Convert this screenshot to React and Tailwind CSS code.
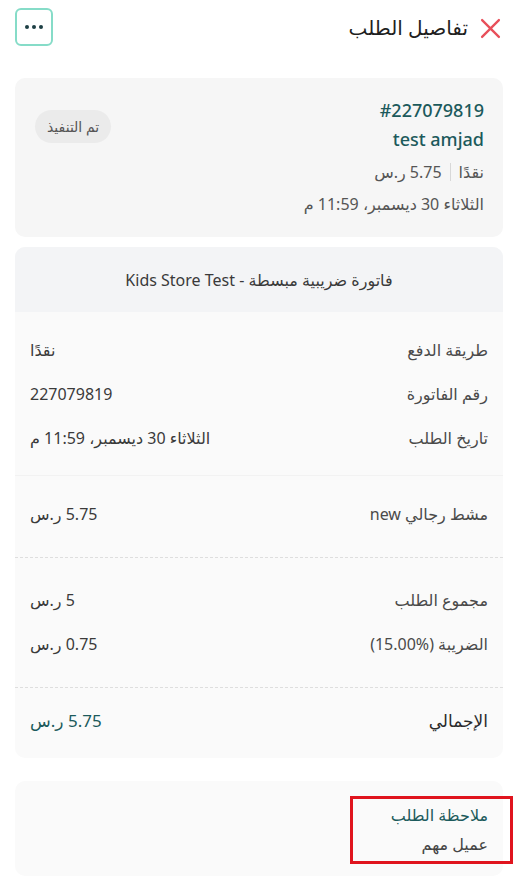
import React from 'react';

const font = { fontFamily: '"Noto Sans", "DejaVu Sans", sans-serif' };

function Row({ label, value, valueClass = 'text-[#3a3a3a]', labelClass = 'text-[#4a4a4a]' }) {
  return (
    <div className="flex items-center justify-between h-[44px] text-[16px]">
      <span className={labelClass}>{label}</span>
      <span className={valueClass}>{value}</span>
    </div>
  );
}

export default function App() {
  return (
    <div dir="rtl" style={font} className="w-[525px] min-h-[881px] bg-white pr-[22px] pl-[15px] relative overflow-hidden">
      {/* الهيدر */}
      <div className="flex items-start justify-between h-[78px] pt-[8px]">
        <div className="flex items-center gap-[12px] pt-[5px] pr-[2px]">
          <svg width="21" height="21" viewBox="0 0 20 20" fill="none">
            <path d="M2 2 L18 18 M18 2 L2 18" stroke="#e84f5a" strokeWidth="2.2" strokeLinecap="round" />
          </svg>
          <span className="text-[20px] text-[#1f1f1f] font-medium">تفاصيل الطلب</span>
        </div>
        <button className="w-[38px] h-[38px] rounded-[6px] border-2 border-[#86dcc8] flex items-center justify-center gap-[3px]">
          <span className="w-[4px] h-[4px] rounded-full bg-[#1d3f44]"></span>
          <span className="w-[4px] h-[4px] rounded-full bg-[#1d3f44]"></span>
          <span className="w-[4px] h-[4px] rounded-full bg-[#1d3f44]"></span>
        </button>
      </div>

      {/* ملخص الطلب */}
      <div className="bg-[#f6f6f6] rounded-[10px] h-[159px] pr-[19px] pl-[20px] pt-[17px] flex items-start justify-between">
        <div className="flex flex-col items-start">
          <span className="text-[18px] leading-[30px] text-[#1c5a5c] font-medium">#227079819</span>
          <span className="text-[18px] leading-[28px] text-[#1c5a5c] font-medium">test amjad</span>
          <div className="flex items-center gap-[8px] text-[16px] leading-[34px] text-[#555] mt-[2px]">
            <span>نقدًا</span>
            <span className="w-px h-[18px] bg-[#d8d8d8]"></span>
            <span>5.75 ر.س</span>
          </div>
          <span className="text-[16px] leading-[30px] text-[#555]">الثلاثاء 30 ديسمبر، 11:59 م</span>
        </div>
        <span className="mt-[15px] bg-[#ebebeb] rounded-full h-[33px] px-[12px] flex items-center text-[14px] text-[#555]">تم التنفيذ</span>
      </div>

      {/* الفاتورة */}
      <div className="mt-[10px] rounded-[10px] overflow-hidden bg-[#fafafa]">
        <div className="bg-[#f3f4f6] h-[65px] flex items-center justify-center text-[16px] text-[#3a3a3a]">
          فاتورة ضريبية مبسطة - Kids Store Test
        </div>
        <div className="px-[15px] pt-[16px] pb-[15px]">
          <Row label="طريقة الدفع" value="نقدًا" />
          <Row label="رقم الفاتورة" value="227079819" />
          <Row label="تاريخ الطلب" value="الثلاثاء 30 ديسمبر، 11:59 م" />
        </div>
        <div className="border-t border-[#f2f2f2] px-[15px] pt-[16px] pb-[21px]">
          <Row label="مشط رجالي new" value="5.75 ر.س" />
        </div>
        <div className="border-t border-dashed border-[#dedede] px-[15px] pt-[20px] pb-[21px]">
          <Row label="مجموع الطلب" value="5 ر.س" />
          <Row label={<>الضريبة <span dir="ltr">(15.00%)</span></>} value="0.75 ر.س" />
        </div>
        <div className="border-t border-dashed border-[#dedede] px-[15px] pt-[11px] pb-[15px]">
          <Row label="الإجمالي" value="5.75 ر.س" labelClass="text-[#2a2a2a] text-[17px]" valueClass="text-[#1c5a5c] text-[17px]" />
        </div>
      </div>

      {/* ملاحظة الطلب */}
      <div className="mt-[23px] bg-[#fafafa] rounded-[10px] h-[95px] pr-[15px] pt-[20px] relative">
        <div className="text-[16px] leading-[28px] text-[#1c5a5c] font-medium">ملاحظة الطلب</div>
        <div className="text-[16px] leading-[30px] text-[#444]">عميل مهم</div>
        <div className="absolute top-[15px] right-[-10px] w-[163px] h-[68px] border-[3px] border-[#e0141e]"></div>
      </div>
    </div>
  );
}
